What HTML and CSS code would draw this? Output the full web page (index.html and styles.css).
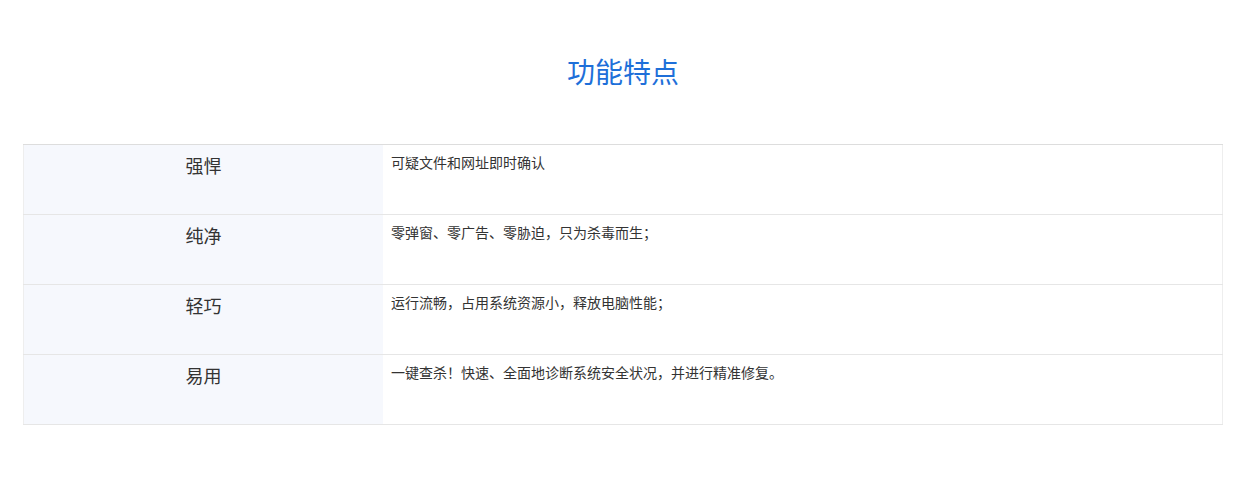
FILE: index.html
```
<html>
    <head>
        <link rel="stylesheet" href="styles.css">
    </head>
<body>
    <h1 class="title">功能特点</h1>

    <table class="featTable">
        <tr>
            <td class="featName">强悍</td>
            <td class="featDesc">可疑文件和网址即时确认</td>
        </tr>
        <tr>
            <td class="featName">纯净</td>
            <td class="featDesc">零弹窗、零广告、零胁迫，只为杀毒而生；</td>
        </tr>
        <tr>
            <td class="featName">轻巧</td>
            <td class="featDesc">运行流畅，占用系统资源小，释放电脑性能；</td>
        </tr>
        <tr>
            <td class="featName">易用</td>
            <td class="featDesc">一键查杀！快速、全面地诊断系统安全状况，并进行精准修复。</td>
        </tr>
    </table>
</body>
</html>
```

FILE: styles.css
```
* {
    font-family: "Noto Sans CJK SC", "Noto Sans", sans-serif;
}
body {
    margin: 0;
    padding: 0 15px 0 23px;
}
.title {
    margin: 0;
    padding-top: 51px;
    height: 40px;
    margin-bottom: 53px;
    font-size: 28px;
    line-height: 40px;
    font-weight: normal;
    text-align: center;
    color: #1e6fd9;
}

.featTable {
    width: 1200px;
    border-collapse: collapse;
    border-left: 1px solid #eeeeee;
    border-right: 1px solid #eeeeee;
}
.featTable td {
    height: 70px;
    vertical-align: top;
    border-top: 1px solid #dddddd;
    border-bottom: 1px solid #e6e6e6;
    color: #333333;
}
.featName {
    width: 359px;
    background: #f6f8fd;
    text-align: center;
    font-size: 18px;
    line-height: 27px;
    padding: 7px 0 0 0;
}
.featDesc {
    font-size: 14px;
    line-height: 21px;
    padding: 7px 8px 0 8px;
}
```
